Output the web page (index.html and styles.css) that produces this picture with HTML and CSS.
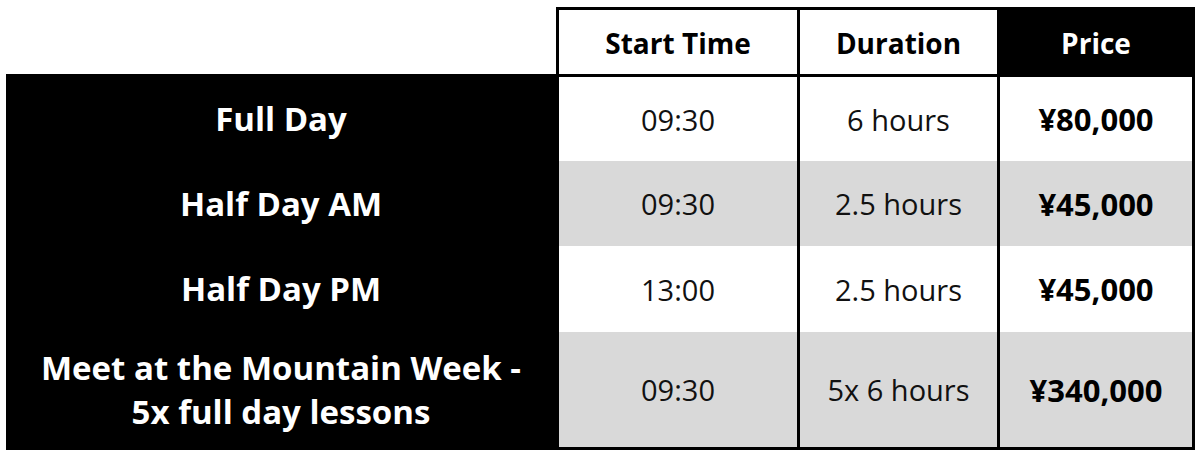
FILE: index.html
```html
<!DOCTYPE html>
<html>
<head>
<meta charset="utf-8">
<link rel="stylesheet" href="styles.css">
</head>
<body>
<div class="table">
  <div class="cell blank"></div>
  <div class="cell head">Start Time</div>
  <div class="cell head">Duration</div>
  <div class="cell head dark">Price</div>

  <div class="cell name r1">Full Day</div>
  <div class="cell val r1">09:30</div>
  <div class="cell val r1">6 hours</div>
  <div class="cell val price r1">¥80,000</div>

  <div class="cell name r2">Half Day AM</div>
  <div class="cell val alt r2">09:30</div>
  <div class="cell val alt r2">2.5 hours</div>
  <div class="cell val alt price r2">¥45,000</div>

  <div class="cell name r3">Half Day PM</div>
  <div class="cell val r3">13:00</div>
  <div class="cell val r3">2.5 hours</div>
  <div class="cell val price r3">¥45,000</div>

  <div class="cell name r4">Meet at the Mountain Week -<br>5x full day lessons</div>
  <div class="cell val alt r4">09:30</div>
  <div class="cell val alt r4">5x 6 hours</div>
  <div class="cell val alt price r4">¥340,000</div>
</div>
</body>
</html>
```
FILE: styles.css
```css
html, body {
  margin: 0;
  padding: 0;
  background: #fff;
}
body {
  padding: 7px 0 0 6px;
  font-family: "Open Sans", "Noto Sans", sans-serif;
  color: #111;
}
.table {
  display: grid;
  grid-template-columns: 550px 238px 197px 192px;
  grid-template-rows: 70px 84px 85px 86px 115px;
  column-gap: 3px;
  row-gap: 0;
  width: 1186px;
  background: #000;
  border-right: 3px solid #000;
  border-bottom: 3px solid #000;
}
.cell {
  display: flex;
  align-items: center;
  justify-content: center;
  text-align: center;
  box-sizing: border-box;
}
.blank {
  background: #fff;
  border-bottom: 3px solid #000;
}
.head {
  background: #fff;
  border-top: 3px solid #000;
  border-bottom: 3px solid #000;
  font-weight: 700;
  font-size: 28px;
  color: #000;
  padding-top: 2px;
}
.head.dark {
  background: #000;
  color: #fff;
}
.name {
  background: #000;
  color: #fff;
  font-weight: 700;
  font-size: 33px;
  line-height: 44px;
}
.val {
  background: #fff;
  font-size: 29px;
}
.val.alt {
  background: #d9d9d9;
}
.price {
  font-weight: 700;
  font-size: 31px;
  color: #000;
}
```
